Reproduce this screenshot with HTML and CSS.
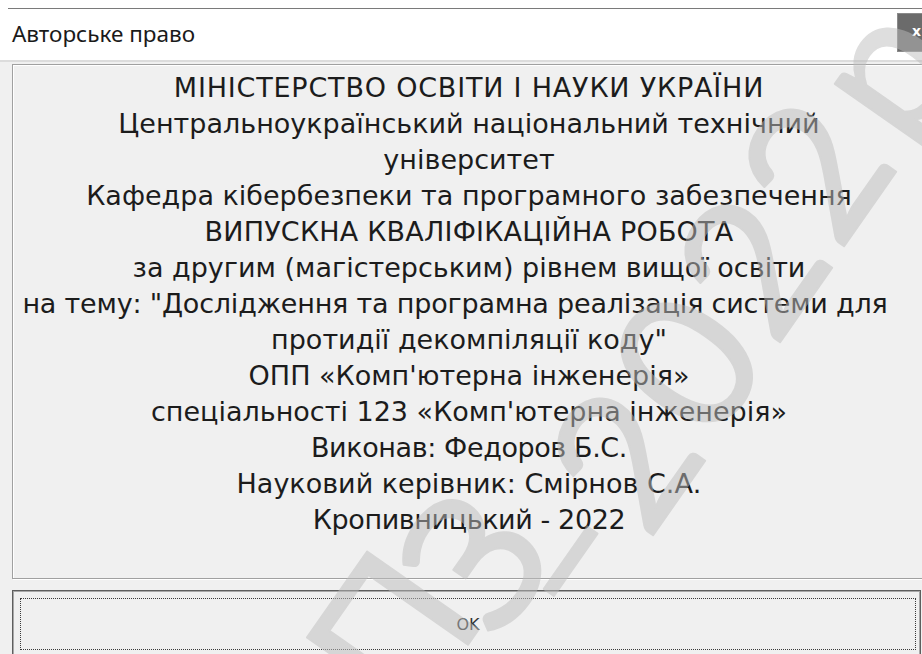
FILE: index.html
```html
<!DOCTYPE html>
<html lang="uk">
<head>
<meta charset="utf-8">
<title>Авторське право</title>
<link rel="stylesheet" href="styles.css">
</head>
<body>
<div class="window">
  <div class="titlebar">
    <div class="titlebar-inner">
      <span class="title">Авторське право</span>
      <span class="close">x</span>
    </div>
  </div>
  <div class="content">
    <div class="group">
      <p class="info">
        <span class="line caps-wide">МІНІСТЕРСТВО ОСВІТИ І НАУКИ УКРАЇНИ</span>
        <span class="line">Центральноукраїнський національний технічний</span>
        <span class="line">університет</span>
        <span class="line">Кафедра кібербезпеки та програмного забезпечення</span>
        <span class="line caps">ВИПУСКНА КВАЛІФІКАЦІЙНА РОБОТА</span>
        <span class="line">за другим (магістерським) рівнем вищої освіти</span>
        <span class="line line-long">на тему: "Дослідження та програмна реалізація системи для</span>
        <span class="line">протидії декомпіляції коду"</span>
        <span class="line">ОПП «Комп'ютерна інженерія»</span>
        <span class="line">спеціальності 123 «Комп'ютерна інженерія»</span>
        <span class="line narrow">Виконав: Федоров Б.С.</span>
        <span class="line">Науковий керівник: Смірнов С.А.</span>
        <span class="line narrow">Кропивницький - 2022</span>
      </p>
    </div>
    <div class="button"><span class="focus">OK</span></div>
  </div>
  <svg class="watermark" width="922" height="654" viewBox="0 0 922 654" aria-hidden="true">
    <g class="wm">
      <text transform="translate(388 630) rotate(-55)">П</text>
      <text transform="translate(470 556) rotate(-55)">З</text>
      <text class="dash" transform="translate(556 551) rotate(-55)">–</text>
      <text transform="translate(619 455) rotate(-55)">2</text>
      <text transform="translate(682 359) rotate(-55)">0</text>
      <text transform="translate(746 262) rotate(-55)">2</text>
      <text transform="translate(810 166) rotate(-55)">2</text>
      <text transform="translate(876 64) rotate(-55)">р</text>
    </g>
  </svg>
</div>
</body>
</html>
```
FILE: styles.css
```css
html, body {
  margin: 0;
  padding: 0;
}

body {
  background: #f0f0f0;
  width: 922px;
  height: 654px;
  overflow: hidden;
}

.window {
  position: relative;
  width: 922px;
  height: 654px;
  overflow: hidden;
  background: #f0f0f0;
}

/* title bar */
.titlebar {
  background: #ffffff;
  padding-top: 8px;
  border-bottom: 2px solid #dcdcdc;
}

.titlebar-inner {
  margin-left: 8px;
  border-top: 1px solid #7a7a7a;
  height: 51px;
  display: flex;
  align-items: center;
}

.title {
  padding-left: 4px;
  font-family: "Noto Sans", sans-serif;
  font-size: 22.5px;
  color: #1a1a1a;
  margin-top: -2px;
}

.close {
  margin-left: auto;
  margin-right: -14px;
  align-self: flex-start;
  margin-top: 4px;
  width: 39px;
  height: 39px;
  box-sizing: border-box;
  background: #6b6b6b;
  border: 1px solid #8a8a8a;
  color: #ffffff;
  font-family: "DejaVu Sans", sans-serif;
  font-weight: bold;
  font-size: 14px;
  line-height: 35px;
  text-align: center;
}

/* dialog body */
.content {
  padding: 2px 0 0 12px;
  display: flex;
  flex-direction: column;
  gap: 11px;
}

.group {
  width: 914px;
  height: 515px;
  box-sizing: border-box;
  border: 1px solid #a0a0a0;
  box-shadow: inset 1px 1px 0 #ffffff, 1px 1px 0 #ffffff;
  padding-top: 5px;
}

.info {
  margin: 0;
  text-align: center;
  font-family: "DejaVu Sans", sans-serif;
  font-size: 27px;
  line-height: 36px;
  color: #1c1c1c;
}

.line {
  display: block;
}

.caps-wide {
  letter-spacing: 0.8px;
}

.caps {
  letter-spacing: 0.2px;
}

.narrow {
  letter-spacing: -0.4px;
}

.line-long {
  padding-right: 28px;
  letter-spacing: -0.2px;
}

.button {
  width: 909px;
  height: 68px;
  box-sizing: border-box;
  border: 1px solid #5e5e5e;
  box-shadow: inset 1px 1px 0 #a8a8a8, inset -1px -1px 0 #a8a8a8;
  padding: 7px 4px 7px 7px;
  display: flex;
}

.focus {
  flex: 1;
  border: 1px dotted #3a3a3a;
  display: flex;
  align-items: center;
  justify-content: center;
  font-family: "DejaVu Sans", sans-serif;
  font-size: 16px;
  color: #333333;
}

/* diagonal watermark drawn over the dialog */
.watermark {
  position: absolute;
  left: 0;
  top: 0;
  pointer-events: none;
}

.wm {
  opacity: 0.5;
}

.wm text {
  font-family: "Lato", "Open Sans", sans-serif;
  font-weight: 400;
  font-size: 190px;
  text-anchor: middle;
  dominant-baseline: central;
  fill: #bcbcbc;
  stroke: #bcbcbc;
  stroke-width: 2;
  stroke-linejoin: round;
}
```
